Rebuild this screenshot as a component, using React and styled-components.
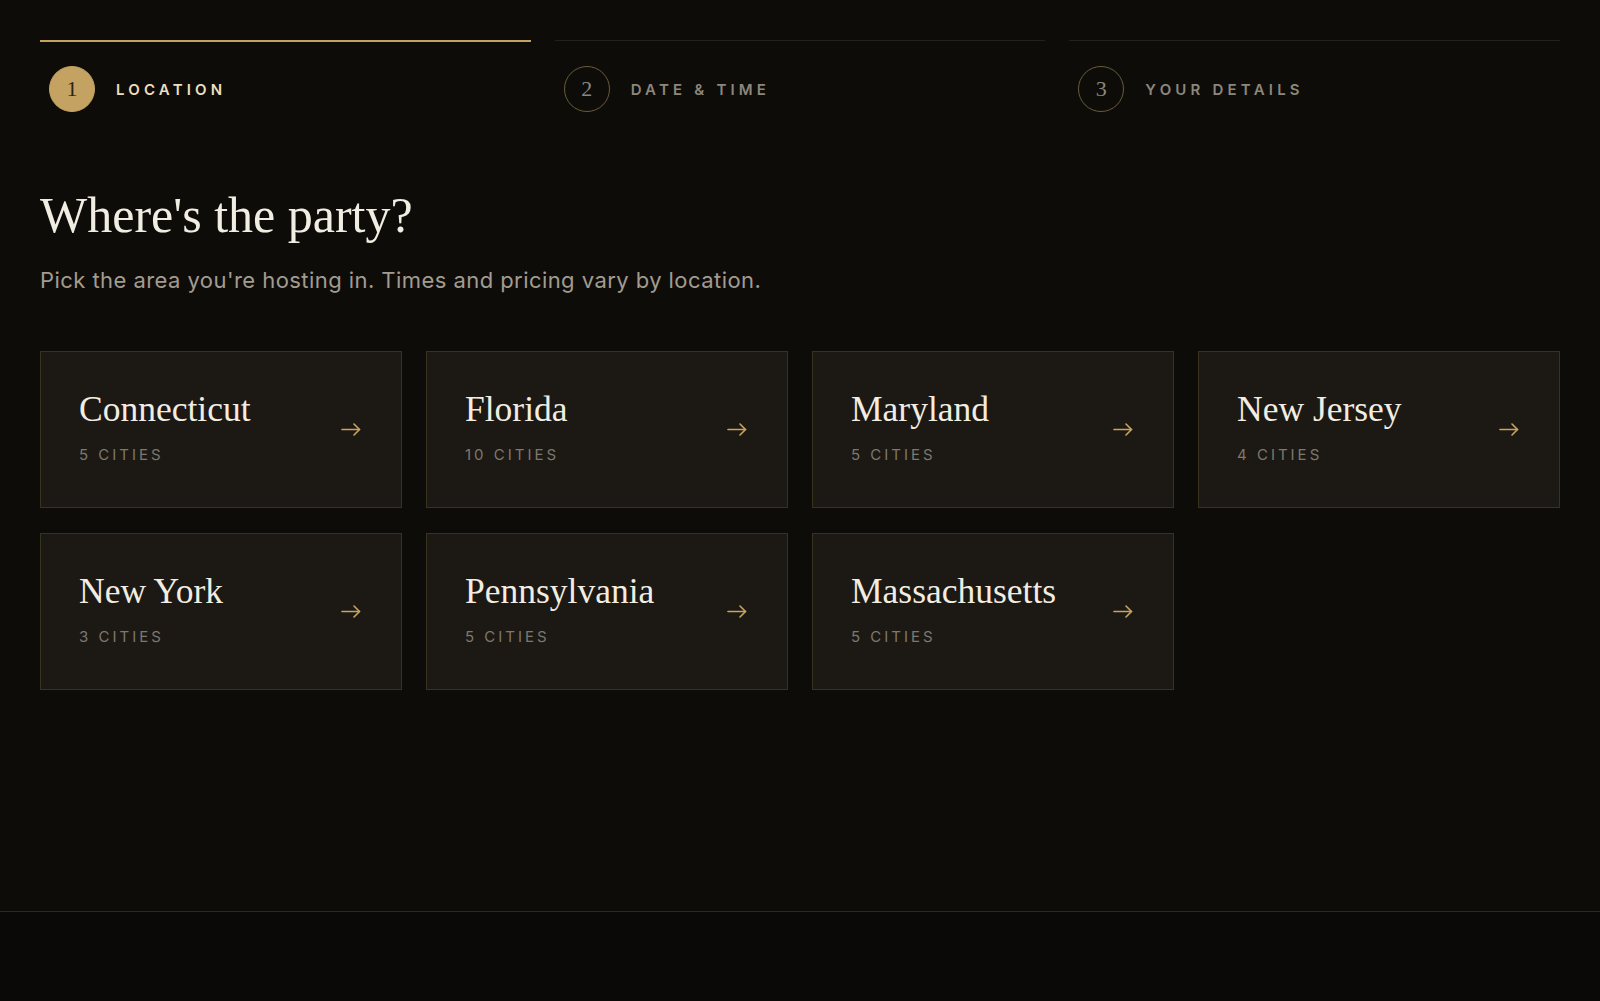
import React from "react";
import styled, { createGlobalStyle } from "styled-components";

const GlobalStyle = createGlobalStyle`
  html, body { margin: 0; padding: 0; background: #0e0c09; }
  body { font-family: "Inter", "Liberation Sans", sans-serif; -webkit-font-smoothing: antialiased; }
  * { box-sizing: border-box; }
`;

const Page = styled.div`
  min-height: 100vh;
  display: flex;
  flex-direction: column;
  background: #0e0c09;
`;

const Main = styled.main`
  flex: 1;
  padding: 40px 40px 0;
`;

const Steps = styled.ol`
  list-style: none;
  margin: 0;
  padding: 0;
  display: grid;
  grid-template-columns: repeat(3, 1fr);
  gap: 24px;
`;

const Step = styled.li`
  border-top: ${p => (p.$active ? "2px solid #c4a362" : "1px solid #24211b")};
  padding: ${p => (p.$active ? "24px" : "25px")} 9px 0;
  display: flex;
  align-items: center;
  gap: 21px;
`;

const StepNum = styled.span`
  width: 46px;
  height: 46px;
  border-radius: 50%;
  display: flex;
  align-items: center;
  justify-content: center;
  font-family: "Liberation Serif", serif;
  font-size: 22px;
  background: ${p => (p.$active ? "#c4a362" : "transparent")};
  border: 1.5px solid ${p => (p.$active ? "#c4a362" : "#6a5c39")};
  color: ${p => (p.$active ? "#2a2318" : "#8c877b")};
`;

const StepLabel = styled.span`
  font-size: 15px;
  font-weight: 600;
  letter-spacing: 0.28em;
  text-transform: uppercase;
  color: ${p => (p.$active ? "#eadfbf" : "#8c877b")};
`;

const Heading = styled.h1`
  margin: 76px 0 0;
  font-family: "Liberation Serif", serif;
  font-weight: 400;
  font-size: 50px;
  line-height: 55px;
  color: #f2ede2;
`;

const Lead = styled.p`
  margin: 21px 0 0;
  font-size: 22px;
  line-height: 32px;
  letter-spacing: 0.02em;
  color: #a29c90;
`;

const Grid = styled.div`
  margin-top: 55px;
  display: grid;
  grid-template-columns: repeat(4, 1fr);
  gap: 25px 24px;
`;

const Card = styled.button`
  height: 157px;
  display: flex;
  align-items: center;
  justify-content: space-between;
  padding: 0 40px 0 38px;
  background: #1c1915;
  border: 1px solid #37331f;
  text-align: left;
  cursor: pointer;
  font: inherit;
`;

const CardText = styled.div`
  display: flex;
  flex-direction: column;
  gap: 14px;
  margin-bottom: 6px;
`;

const CardTitle = styled.span`
  font-family: "Liberation Serif", serif;
  font-size: 35.5px;
  line-height: 42px;
  color: #f2ede2;
`;

const CardMeta = styled.span`
  font-size: 15px;
  line-height: 21px;
  letter-spacing: 0.2em;
  text-transform: uppercase;
  color: #7c786e;
`;

const Footer = styled.footer`
  height: 90px;
  border-top: 1px solid #2c2a1a;
  background: #0a0907;
`;

const Arrow = () => (
  <svg width="20" height="13" viewBox="0 0 20 13" fill="none" stroke="#c9a45e" strokeWidth="1.6" strokeLinecap="round" strokeLinejoin="round">
    <path d="M1 6.5h17.5" />
    <path d="M13 1l5.5 5.5L13 12" />
  </svg>
);

const steps = [
  { n: 1, label: "Location", active: true },
  { n: 2, label: "Date & Time" },
  { n: 3, label: "Your Details" },
];

const states = [
  { name: "Connecticut", cities: 5 },
  { name: "Florida", cities: 10 },
  { name: "Maryland", cities: 5 },
  { name: "New Jersey", cities: 4 },
  { name: "New York", cities: 3 },
  { name: "Pennsylvania", cities: 5 },
  { name: "Massachusetts", cities: 5 },
];

export default function App() {
  return (
    <Page>
      <GlobalStyle />
      <Main>
        <Steps>
          {steps.map(s => (
            <Step key={s.n} $active={s.active}>
              <StepNum $active={s.active}>{s.n}</StepNum>
              <StepLabel $active={s.active}>{s.label}</StepLabel>
            </Step>
          ))}
        </Steps>
        <Heading>Where's the party?</Heading>
        <Lead>Pick the area you're hosting in. Times and pricing vary by location.</Lead>
        <Grid>
          {states.map(s => (
            <Card key={s.name}>
              <CardText>
                <CardTitle>{s.name}</CardTitle>
                <CardMeta>{s.cities} cities</CardMeta>
              </CardText>
              <Arrow />
            </Card>
          ))}
        </Grid>
      </Main>
      <Footer />
    </Page>
  );
}
